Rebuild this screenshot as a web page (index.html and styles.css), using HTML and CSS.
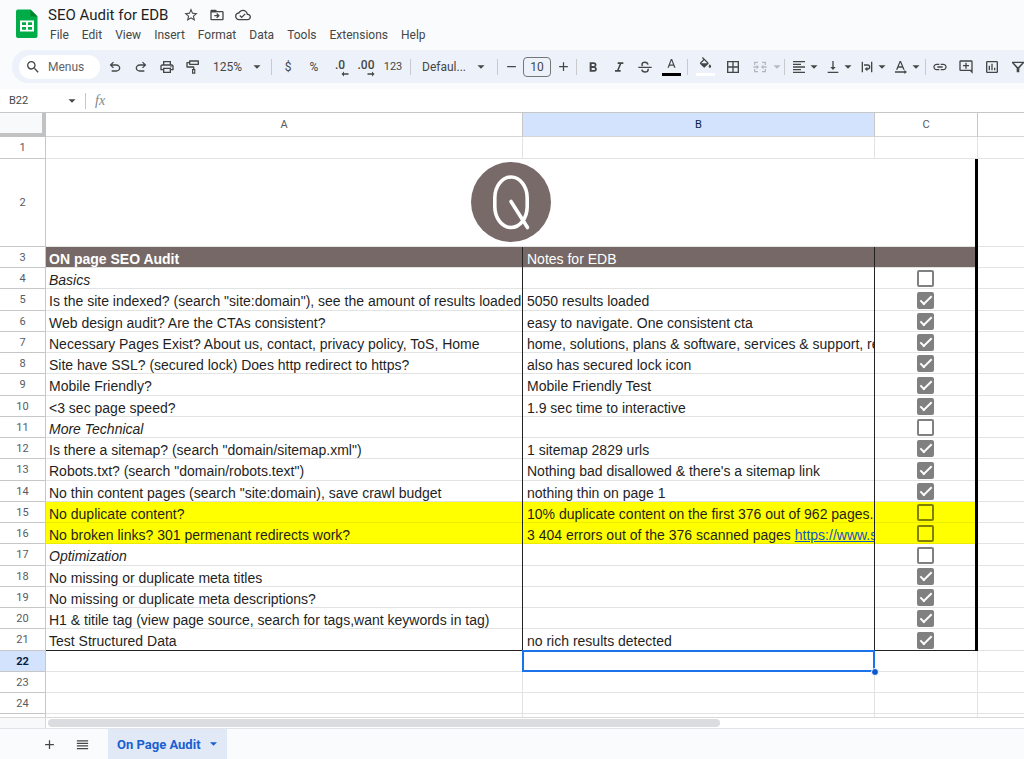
FILE: index.html
```html
<!DOCTYPE html>
<html lang="en">
<head>
<meta charset="utf-8">
<title>SEO Audit for EDB</title>
<link rel="stylesheet" href="styles.css">
</head>
<body>
<svg class="defs" aria-hidden="true">
  <symbol id="caret" viewBox="0 0 8 8"><path d="M0.500 2.200h7L4 5.800z"/></symbol>
</svg>
<header class="top">
  <svg class="logo" viewBox="0 0 22 30" aria-label="Sheets">
    <path fill="#00ac47" d="M2 0.500h12.500L21.500 7.500V27a2 2 0 0 1-2 2H2a2 2 0 0 1-2-2V2.500a2 2 0 0 1 2-2z"/>
    <path fill="#00832d" d="M14.500 0.500l7 7h-7z"/>
    <path fill="#fff" fill-rule="evenodd" d="M4 11.500h14v11H4zM6 13.300v2.600h4v-2.600zM12 13.300v2.600h4v-2.600zM6 18v2.700h4V18zM12 18v2.700h4V18z"/>
  </svg>
  <div class="heading">
    <div class="title-row">
      <h1>SEO Audit for EDB</h1>
      <button class="mini" aria-label="Star"><svg viewBox="0 0 24 24"><path d="M22 9.240l-7.190-.62L12 2 9.190 8.630 2 9.240l5.460 4.730L5.820 21 12 17.270 18.180 21l-1.630-7.030L22 9.240zM12 15.400l-3.760 2.270 1-4.280-3.320-2.880 4.380-.38L12 6.100l1.710 4.040 4.380.38-3.320 2.880 1 4.280L12 15.400z"/></svg></button>
      <button class="mini" aria-label="Move"><svg viewBox="0 0 24 24"><path d="M20 6h-8l-2-2H4c-1.100 0-2 .9-2 2v12c0 1.100.9 2 2 2h16c1.100 0 2-.9 2-2V8c0-1.100-.9-2-2-2zm0 12H4V8h16v10zM12.200 17l4-4-4-4-1.400 1.400 1.600 1.600H8v2h4.400l-1.600 1.600z"/><path d="M3 5h8v3H3z"/></svg></button>
      <button class="mini" aria-label="Saved to Drive"><svg viewBox="0 0 24 24"><path d="M19.350 10.040C18.670 6.590 15.640 4 12 4 9.110 4 6.600 5.640 5.350 8.040 2.340 8.360 0 10.910 0 14c0 3.310 2.690 6 6 6h13c2.760 0 5-2.240 5-5 0-2.640-2.050-4.780-4.650-4.960zM19 18H6c-2.210 0-4-1.790-4-4 0-2.050 1.530-3.760 3.560-3.970l1.070-.11.5-.95C8.080 7.140 9.940 6 12 6c2.620 0 4.880 1.860 5.390 4.430l.3 1.500 1.530.11c1.560.1 2.780 1.410 2.780 2.960 0 1.650-1.350 3-3 3zm-9-3.820l-2.090-2.090L6.500 13.500 10 17l6.010-6.010-1.410-1.410z"/></svg></button>
    </div>
    <nav class="menus">
      <button>File</button><button>Edit</button><button>View</button><button>Insert</button><button>Format</button><button>Data</button><button>Tools</button><button>Extensions</button><button>Help</button>
    </nav>
  </div>
</header>

<div class="toolbar" role="toolbar" aria-label="Main">
  <button class="search"><svg viewBox="0 0 24 24"><path d="M15.500 14h-.79l-.28-.27A6.470 6.470 0 0 0 16 9.500 6.500 6.500 0 1 0 9.500 16c1.610 0 3.090-.59 4.230-1.570l.27.28v.79l5 4.990L20.490 19l-4.990-5zm-6 0C7.010 14 5 11.990 5 9.500S7.010 5 9.500 5 14 7.010 14 9.500 11.990 14 9.500 14z"/></svg>Menus</button>
  <button class="tool" aria-label="Undo"><svg viewBox="0 0 24 24"><path d="M7 19v-2h7.100q1.575 0 2.738-1T18 13.500 16.838 11 14.100 10H7.800l2.600 2.600L9 14 4 9l5-5 1.400 1.400L7.800 8h6.300q2.425 0 4.163 1.575T20 13.500t-1.737 3.925T14.100 19z"/></svg></button>
  <button class="tool" aria-label="Redo"><svg viewBox="0 0 24 24"><path d="M17 19v-2H9.900q-1.575 0-2.738-1T6 13.500 7.163 11 9.900 10h6.300l-2.600 2.600L15 14l5-5-5-5-1.400 1.400L16.200 8H9.900Q7.475 8 5.738 9.575T4 13.500t1.738 3.925T9.900 19z"/></svg></button>
  <button class="tool" aria-label="Print"><svg viewBox="0 0 24 24"><path d="M19 8h-1V3H6v5H5c-1.660 0-3 1.340-3 3v6h4v4h12v-4h4v-6c0-1.660-1.340-3-3-3zM8 5h8v3H8V5zm8 14H8v-4h8v4zm2-4v-2H6v2H4v-4c0-.55.45-1 1-1h14c.55 0 1 .45 1 1v4h-2z"/><circle cx="18" cy="11.500" r="1"/></svg></button>
  <button class="tool" aria-label="Paint format"><svg viewBox="0 0 24 24"><path fill-rule="evenodd" d="M7 2h13a1 1 0 0 1 1 1v5a1 1 0 0 1-1 1H7a1 1 0 0 1-1-1V6.500H4V11h9a1 1 0 0 1 1 1v3h1.500v7h-5v-7H12v-2H3a1 1 0 0 1-1-1V5.500a1 1 0 0 1 1-1h3V3a1 1 0 0 1 1-1zM8 4v3h11V4zM12.200 16.700v3.600h1.600v-3.600z"/></svg></button>
  <label class="pick pick-zoom"><select aria-label="Zoom"><option>125%</option></select><svg class="caret"><use href="#caret"/></svg></label>
  <span class="sep"></span>
  <button class="tool">$</button>
  <button class="tool">%</button>
  <button class="tool decimal" aria-label="Decrease decimal places">.0<svg viewBox="0 0 8 6"><path d="M3 0.500L0.500 3 3 5.500V3.700h4.500V2.300H3z"/></svg></button>
  <button class="tool decimal" aria-label="Increase decimal places">.00<svg viewBox="0 0 8 6"><path d="M5 0.500L7.500 3 5 5.500V3.700H.5V2.300H5z"/></svg></button>
  <button class="tool num">123</button>
  <span class="sep"></span>
  <label class="pick pick-font"><select aria-label="Font"><option>Defaul...</option></select><svg class="caret"><use href="#caret"/></svg></label>
  <span class="sep"></span>
  <div class="stepper">
    <button aria-label="Decrease font size"><svg viewBox="0 0 24 24"><path d="M5 11h14v2H5z"/></svg></button>
    <input type="text" value="10" aria-label="Font size">
    <button aria-label="Increase font size"><svg viewBox="0 0 24 24"><path d="M19 13h-6v6h-2v-6H5v-2h6V5h2v6h6v2z"/></svg></button>
  </div>
  <span class="sep"></span>
  <button class="tool" aria-label="Bold"><svg viewBox="0 0 24 24"><path d="M15.600 11.790c.97-.67 1.650-1.770 1.650-2.790 0-2.260-1.750-4-4-4H7v14h7.040c2.090 0 3.710-1.700 3.710-3.790 0-1.520-.86-2.820-2.150-3.420zM10 7.500h3c.83 0 1.500.67 1.500 1.500s-.67 1.500-1.500 1.500h-3v-3zm3.500 9H10v-3h3.500c.83 0 1.500.67 1.500 1.500s-.67 1.500-1.500 1.500z"/></svg></button>
  <button class="tool" aria-label="Italic"><svg viewBox="0 0 24 24"><path d="M10 5v2.500h2.900l-3.700 9H6V19h8.500v-2.500h-2.800l3.700-9H18.500V5z"/></svg></button>
  <button class="tool" aria-label="Strikethrough"><svg viewBox="0 0 24 24"><path d="M2 11.500h20v2H2z"/><path fill="none" stroke="currentColor" stroke-width="2.200" d="M16.500 8.500C16 6.300 14.500 5 12 5S7.500 6.500 7.500 8.300c0 .9.300 1.600.8 2.200M7.200 16c.5 2.300 2.300 3.500 4.800 3.500s4.700-1.300 4.700-3.500c0-.6-.1-1-.3-1.500"/></svg></button>
  <button class="tool ink" aria-label="Text color"><svg viewBox="0 0 24 24"><path d="M11 3L5.500 17h2.250l1.120-3h6.250l1.120 3h2.250L13 3h-2zm-1.380 9L12 5.670 14.380 12H9.620z"/></svg><i class="swatch black"></i></button>
  <span class="sep"></span>
  <button class="tool wide ink" aria-label="Fill color"><svg viewBox="0 0 24 24"><path d="M16.560 8.940L7.620 0 6.210 1.410l2.380 2.380-5.150 5.150c-.59.59-.59 1.540 0 2.120l5.500 5.500c.29.29.68.44 1.060.44s.77-.15 1.060-.44l5.500-5.500c.59-.58.59-1.530 0-2.120zM5.210 10L10 5.210 14.790 10H5.210zM19 11.500s-2 2.170-2 3.500c0 1.100.9 2 2 2s2-.9 2-2c0-1.330-2-3.500-2-3.500z"/></svg><i class="swatch white"></i></button>
  <button class="tool wide" aria-label="Borders"><svg viewBox="0 0 24 24"><path fill-rule="evenodd" d="M3 3h18v18H3V3zm8 16v-6H5v6h6zm0-8V5H5v6h6zm8 8v-6h-6v6h6zm0-8V5h-6v6h6z"/></svg></button>
  <button class="tool dim" aria-label="Merge cells" disabled><svg viewBox="0 0 24 24"><path d="M3 4h6v2H5v3H3zM15 4h6v5h-2V6h-4zM3 15h2v3h4v2H3zM19 15h2v5h-6v-2h4zM2 11h5V8.500l3.500 3.500L7 15.500V13H2zM22 11h-5V8.500L13.500 12l3.500 3.500V13h5z"/></svg></button>
  <svg class="caret dim"><use href="#caret"/></svg>
  <span class="sep"></span>
  <button class="drop" aria-label="Horizontal align"><svg viewBox="0 0 24 24"><path d="M15 15H3v2h12v-2zm0-8H3v2h12V7zM3 13h18v-2H3v2zm0 8h18v-2H3v2zM3 3v2h18V3H3z"/></svg><svg class="caret"><use href="#caret"/></svg></button>
  <button class="drop" aria-label="Vertical align"><svg viewBox="0 0 24 24"><path d="M16 12h-3V3h-2v9H8l4 4.500 4-4.500zM4 19v2h16v-2H4z"/></svg><svg class="caret"><use href="#caret"/></svg></button>
  <button class="drop" aria-label="Text wrapping"><svg viewBox="0 0 24 24"><path d="M4 4h2v16H4zM18 4h2v16h-2z"/><path d="M7.500 8H13a4 4 0 0 1 0 8h-.500v2.500L8.500 15l4-3.500V14h.5a2 2 0 0 0 0-4H7.500z"/></svg><svg class="caret"><use href="#caret"/></svg></button>
  <button class="drop" aria-label="Text rotation"><svg viewBox="0 0 24 24"><path d="M10 3L4.500 16h2.200l1.200-3h6.200l1.200 3h2.200L12 3zM8.700 11L11 5.400l2.300 5.600zM3 18.500h14V16.500l4 3-4 3v-2H3z"/></svg><svg class="caret"><use href="#caret"/></svg></button>
  <span class="sep sep-tight"></span>
  <button class="tool" aria-label="Insert link"><svg viewBox="0 0 24 24"><path d="M3.900 12c0-1.710 1.390-3.100 3.100-3.100h4V7H7c-2.760 0-5 2.240-5 5s2.240 5 5 5h4v-1.900H7c-1.710 0-3.100-1.390-3.100-3.100zM8 13h8v-2H8v2zm9-6h-4v1.900h4c1.710 0 3.100 1.390 3.100 3.100s-1.390 3.100-3.100 3.100h-4V17h4c2.760 0 5-2.240 5-5s-2.240-5-5-5z"/></svg></button>
  <button class="tool" aria-label="Insert comment"><svg viewBox="0 0 24 24"><path fill-rule="evenodd" d="M22 22l-4-4H4a2 2 0 0 1-2-2V4c0-1.100.9-2 2-2h16a2 2 0 0 1 2 2zM4 4v12h16V4zM11 5.500h2V9h3.500v2H13v3.500h-2V11H7.500V9H11z"/></svg></button>
  <button class="tool" aria-label="Insert chart"><svg viewBox="0 0 24 24"><path fill-rule="evenodd" d="M5 3h14a2 2 0 0 1 2 2v14a2 2 0 0 1-2 2H5a2 2 0 0 1-2-2V5a2 2 0 0 1 2-2zm0 2v14h14V5zM7 10h2v7H7zM11 7h2v10h-2zM15 13h2v4h-2z"/></svg></button>
  <button class="tool" aria-label="Create a filter"><svg viewBox="0 0 24 24"><path fill-rule="evenodd" d="M3 4h18v2l-7 8v6h-4v-6L3 6zM6 6l6 6.500L18 6z"/></svg></button>
</div>

<div class="formula">
  <input class="namebox" type="text" value="B22" aria-label="Name box">
  <svg class="caret"><use href="#caret"/></svg>
  <label class="fx" for="fx">fx</label>
  <input class="fxinput" id="fx" type="text">
</div>

<main class="sheet">
<table class="grid">
  <colgroup><col class="c-num"><col class="c-a"><col class="c-b"><col class="c-c"><col></colgroup>
  <thead><tr><th class="corner"></th><th>A</th><th class="sel">B</th><th>C</th><th></th></tr></thead>
  <tbody>
  <tr><th>1</th><td></td><td></td><td></td><td></td></tr>
  <tr class="banner"><th>2</th><td colspan="3"><svg viewBox="0 0 80 80" aria-label="Q"><circle cx="40" cy="40" r="40" fill="#786a68"/><g fill="none" stroke="#fff" stroke-width="3.600" stroke-linecap="round"><rect x="23.800" y="15" width="32.400" height="50.500" rx="16.200" ry="21"/><path d="M40 39.500L56.500 65.500"/></g></svg></td><td></td></tr>
  <tr class="data head"><th>3</th><td>ON page SEO Audit</td><td>Notes for EDB</td><td></td><td></td></tr>
  <tr class="data section"><th>4</th><td>Basics</td><td></td><td><input type="checkbox" aria-label="Row 4"></td><td></td></tr>
  <tr class="data"><th>5</th><td>Is the site indexed? (search "site:domain"), see the amount of results loaded</td><td>5050 results loaded</td><td><input type="checkbox" aria-label="Row 5" checked></td><td></td></tr>
  <tr class="data"><th>6</th><td>Web design audit? Are the CTAs consistent?</td><td>easy to navigate. One consistent cta</td><td><input type="checkbox" aria-label="Row 6" checked></td><td></td></tr>
  <tr class="data"><th>7</th><td>Necessary Pages Exist? About us, contact, privacy policy, ToS, Home</td><td>home, solutions, plans &amp; software, services &amp; support, res</td><td><input type="checkbox" aria-label="Row 7" checked></td><td></td></tr>
  <tr class="data"><th>8</th><td>Site have SSL? (secured lock) Does http redirect to https?</td><td>also has secured lock icon</td><td><input type="checkbox" aria-label="Row 8" checked></td><td></td></tr>
  <tr class="data"><th>9</th><td>Mobile Friendly?</td><td>Mobile Friendly Test</td><td><input type="checkbox" aria-label="Row 9" checked></td><td></td></tr>
  <tr class="data"><th>10</th><td>&lt;3 sec page speed?</td><td>1.9 sec time to interactive</td><td><input type="checkbox" aria-label="Row 10" checked></td><td></td></tr>
  <tr class="data section"><th>11</th><td>More Technical</td><td></td><td><input type="checkbox" aria-label="Row 11"></td><td></td></tr>
  <tr class="data"><th>12</th><td>Is there a sitemap? (search "domain/sitemap.xml")</td><td>1 sitemap 2829 urls</td><td><input type="checkbox" aria-label="Row 12" checked></td><td></td></tr>
  <tr class="data"><th>13</th><td>Robots.txt? (search "domain/robots.text")</td><td>Nothing bad disallowed &amp; there's a sitemap link</td><td><input type="checkbox" aria-label="Row 13" checked></td><td></td></tr>
  <tr class="data"><th>14</th><td>No thin content pages (search "site:domain), save crawl budget</td><td>nothing thin on page 1</td><td><input type="checkbox" aria-label="Row 14" checked></td><td></td></tr>
  <tr class="data flag"><th>15</th><td>No duplicate content?</td><td>10% duplicate content on the first 376 out of 962 pages. M</td><td><input type="checkbox" aria-label="Row 15"></td><td></td></tr>
  <tr class="data flag"><th>16</th><td>No broken links? 301 permenant redirects work?</td><td>3 404 errors out of the 376 scanned pages <a href="#">https://www.sit</a></td><td><input type="checkbox" aria-label="Row 16"></td><td></td></tr>
  <tr class="data section"><th>17</th><td>Optimization</td><td></td><td><input type="checkbox" aria-label="Row 17"></td><td></td></tr>
  <tr class="data"><th>18</th><td>No missing or duplicate meta titles</td><td></td><td><input type="checkbox" aria-label="Row 18" checked></td><td></td></tr>
  <tr class="data"><th>19</th><td>No missing or duplicate meta descriptions?</td><td></td><td><input type="checkbox" aria-label="Row 19" checked></td><td></td></tr>
  <tr class="data"><th>20</th><td>H1 &amp; titile tag (view page source, search for tags,want keywords in tag)</td><td></td><td><input type="checkbox" aria-label="Row 20" checked></td><td></td></tr>
  <tr class="data last"><th>21</th><td>Test Structured Data</td><td>no rich results detected</td><td><input type="checkbox" aria-label="Row 21" checked></td><td></td></tr>
  <tr><th class="sel">22</th><td></td><td class="active"></td><td></td><td></td></tr>
  <tr><th>23</th><td></td><td></td><td></td><td></td></tr>
  <tr><th>24</th><td></td><td></td><td></td><td></td></tr>
  <tr><th></th><td></td><td></td><td></td><td></td></tr>
  </tbody>
</table>
</main>
<div class="scroll"><div class="track"><div class="thumb"></div></div></div>
<footer class="tabs">
  <button class="tool" aria-label="Add sheet"><svg viewBox="0 0 24 24"><path d="M19 13h-6v6h-2v-6H5v-2h6V5h2v6h6v2z"/></svg></button>
  <button class="tool" aria-label="All sheets"><svg viewBox="0 0 24 24"><path d="M3 5h18v2H3zM3 9.200h18v2H3zM3 13.300h18v2H3zM3 17.500h18v2H3z"/></svg></button>
  <button class="tab">On Page Audit<svg class="caret"><use href="#caret"/></svg></button>
</footer>
</body>
</html>
```
FILE: styles.css
```css
*, ::before, ::after { box-sizing: border-box; }
body {
  margin: 0;
  height: 100vh;
  display: flex;
  flex-direction: column;
  overflow: hidden;
  background: #f9fbfd;
  color: #444746;
  font: 12px Roboto, "Liberation Sans", sans-serif;
}
button, input, select {
  font: inherit;
  color: inherit;
  background: none;
  border: 0;
  padding: 0;
  margin: 0;
}
svg { fill: currentColor; flex: none; }
.defs { position: absolute; width: 0; height: 0; }
.caret { width: 8px; height: 8px; }

/* title and menus */
.top { display: flex; gap: 11px; height: 50px; padding: 4px 0 0 16px; flex: none; }
.logo { width: 22px; height: 30px; margin-top: 5px; }
.title-row { display: flex; align-items: center; gap: 10px; height: 21px; }
.title-row h1 { margin: 0 5px 0 -1px; font: 15px Roboto, sans-serif; color: #1f1f1f; white-space: nowrap; }
.mini { display: flex; }
.mini svg { width: 16px; height: 16px; }
.menus { display: flex; gap: 13px; height: 20px; align-items: center; padding-left: 1px; }

/* toolbar */
.toolbar {
  display: flex;
  align-items: center;
  flex: none;
  height: 33px;
  margin: 0 0 6px 12px;
  padding-left: 7px;
  border-radius: 16px 0 0 16px;
  background: #edf2fa;
  overflow: hidden;
}
.toolbar > * { flex: none; }
.search {
  display: flex;
  align-items: center;
  gap: 7px;
  width: 81px;
  height: 24px;
  margin-right: 2px;
  padding-left: 6px;
  border-radius: 12px;
  background: #fff;
  color: #5f6368;
}
.search svg { width: 16px; height: 16px; color: #444746; }
.tool { display: flex; align-items: center; justify-content: center; width: 26px; height: 24px; }
.tool svg { width: 16px; height: 16px; }
.wide { width: 28px; }
.dim { color: #b4b8be; }
.num { width: 28px; font-size: 11px; }
.decimal { position: relative; font-weight: 500; align-items: flex-start; padding-top: 3px; }
.decimal svg { position: absolute; right: 4px; bottom: 2px; width: 8px; height: 6px; }
.ink { flex-direction: column; gap: 1px; }
.ink svg { width: 15px; height: 15px; }
.swatch { width: 19px; height: 3px; }
.black { background: #000; }
.white { background: #fff; }
.sep { width: 1px; height: 16px; margin: 0 3px; background: #c7c9cc; }
.sep-tight { margin: 0 1px; }
.pick { display: flex; align-items: center; justify-content: space-between; height: 24px; padding: 0 7px; }
.pick select { appearance: none; }
.pick-zoom { width: 62px; }
.pick-font { width: 80px; padding: 0 9px 0 8px; }
.stepper { display: flex; align-items: center; gap: 2px; }
.stepper button { display: flex; justify-content: center; width: 20px; }
.stepper svg { width: 15px; height: 15px; }
.stepper input { width: 28px; height: 20px; border: 1px solid #747775; border-radius: 4px; text-align: center; }
.drop { display: flex; align-items: center; gap: 3px; width: 34px; padding-left: 3px; }
.drop svg:first-child { width: 16px; height: 16px; }

/* formula bar */
.formula { display: flex; align-items: center; flex: none; height: 24px; background: #fff; border-bottom: 1px solid #c7c7c7; }
.namebox { width: 68px; padding-left: 9px; font-size: 11px; }
.fx {
  margin-left: 9px;
  padding-left: 9px;
  border-left: 1px solid #c7c7c7;
  color: #80868b;
  font: italic 14px/16px "Liberation Serif", serif;
}
.fxinput { flex: 1; }

/* cells */
.sheet { flex: 1; min-height: 0; overflow: hidden; background: #fff; border-bottom: 1px solid #d9d9d9; }
.grid { width: 100%; table-layout: fixed; border-spacing: 0; }
.c-num { width: 46px; }
.c-a { width: 477px; }
.c-b { width: 352px; }
.c-c { width: 103px; }
th, td { height: 21px; padding: 0; border: solid #e2e3e3; border-width: 0 1px 1px 0; }
tbody tr:nth-child(4n+1) td, tbody tr:nth-child(4n+1) th { height: 22px; }
th { font-weight: 400; font-size: 11px; border-color: #c7c7c7; color: #575b5f; }
thead th { height: 24px; border-bottom: 1px solid #d5d5d5; }
thead .corner { background: #f8f9fa; border: solid #c2c2c2; border-width: 0 4px 4px 0; }
.grid .sel { background: #d3e3fd; color: #041e49; }
tbody .sel { font-weight: 700; }
td {
  padding: 2px 0 0 3px;
  font: 14px/18px "Liberation Sans", sans-serif;
  color: #1f1f1f;
  white-space: nowrap;
  overflow: hidden;
}
.data td:nth-child(3) { padding-left: 4px; }
/* row lines inside the bordered block are shadows, so column rules stay unbroken */
.data td, .banner td { border-bottom: 0; box-shadow: inset 0 -1px #e2e3e3; }
.grid .banner td { height: 88px; padding: 0 0 2px 1px; border-right: 3px solid #000; }
.banner td svg { display: block; width: 80px; height: 80px; margin: 0 auto; }
.data td:nth-child(2), .data td:nth-child(3) { border-right-color: #222; }
.data td:nth-child(4) { border-right: 3px solid #000; padding: 0; }
.grid th:last-child, .grid td:last-child { border-right: 0; }
.head td:not(:last-child) { background: #766866; color: #fff; }
.head td:nth-child(2) { font-weight: 700; }
.section td { font-style: italic; }
.flag td:not(:last-child) { background: #ff0; box-shadow: inset 0 -1px #ecec00; }
.flag a { color: #1155cc; }
.last td:not(:last-child) { box-shadow: inset 0 -1px #222; }
input[type="checkbox"] {
  appearance: none;
  display: block;
  width: 17px;
  height: 17px;
  margin: 0 auto;
  border: 2px solid #808080;
  border-radius: 2px;
}
input[type="checkbox"]:checked { background: #808080; }
input[type="checkbox"]:checked::after {
  content: "";
  display: block;
  width: 12px;
  height: 6px;
  border: solid #fff;
  border-width: 0 0 2px 2px;
  transform: translate(1px, 2px) rotate(-45deg);
}
.flag input[type="checkbox"] { border-color: #808000; }
td.active { position: relative; overflow: visible; }
.active::before { content: ""; position: absolute; inset: -1px -1px -1px -1px; border: 2px solid #1a73e8; }
.active::after {
  content: "";
  position: absolute;
  right: -5px;
  bottom: -5px;
  width: 8px;
  height: 8px;
  border: 1px solid #fff;
  border-radius: 50%;
  background: #0b57d0;
}

/* scrollbar and sheet tabs */
.scroll { flex: none; height: 11px; padding-left: 45px; background: #f8f9fa; border-bottom: 1px solid #e1e3e6; }
.track { height: 10px; padding: 1px 2px; background: #fff; border-left: 1px solid #d9d9d9; }
.thumb { width: 69%; height: 8px; border-radius: 4px; background: #dadce0; }
.tabs { display: flex; align-items: center; flex: none; gap: 7px; height: 30px; padding-left: 36px; }
.tabs svg { width: 15px; height: 15px; }
.tab {
  display: flex;
  align-items: center;
  gap: 8px;
  height: 30px;
  margin-left: 6px;
  padding: 0 9px;
  background: #e1e9f7;
  color: #1a5fd0;
  font-size: 13px;
  font-weight: 700;
}
.tab .caret { width: 9px; height: 8px; }
```
